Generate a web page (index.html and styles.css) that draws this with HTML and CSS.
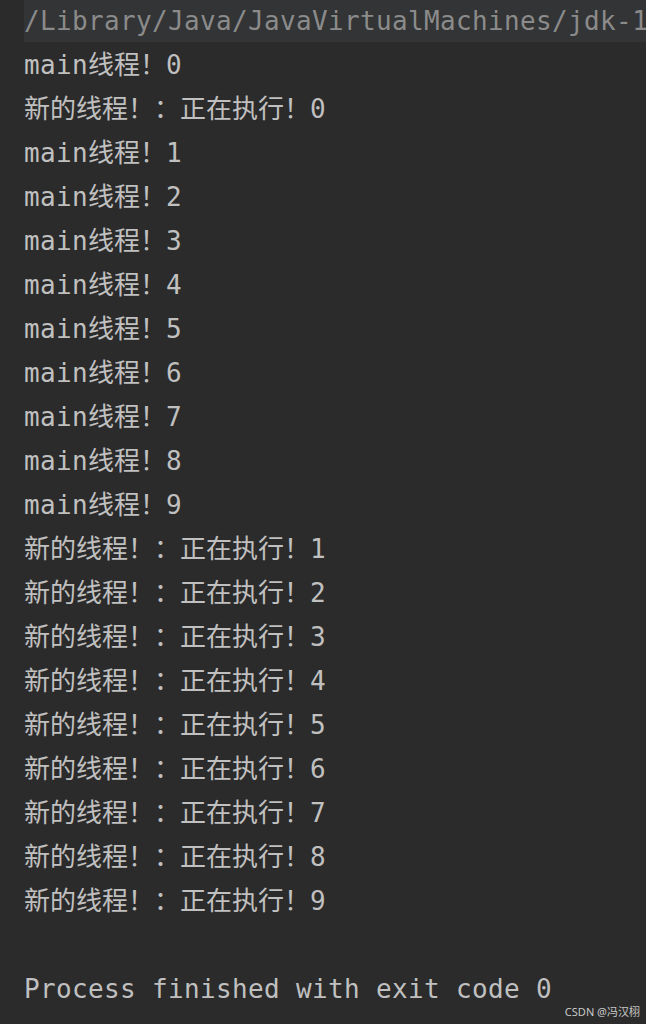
FILE: index.html
```html
<!DOCTYPE html>
<html>
<head>
<meta charset="utf-8">
<link rel="stylesheet" href="styles.css">
</head>
<body>
<div class="console">
  <div class="line cmd"><span class="m">/Library/Java/JavaVirtualMachines/jdk-1</span></div>
  <div class="line"><span class="m">main</span>线程！<span class="m">0</span></div>
  <div class="line">新的线程！：正在执行！<span class="m">0</span></div>
  <div class="line"><span class="m">main</span>线程！<span class="m">1</span></div>
  <div class="line"><span class="m">main</span>线程！<span class="m">2</span></div>
  <div class="line"><span class="m">main</span>线程！<span class="m">3</span></div>
  <div class="line"><span class="m">main</span>线程！<span class="m">4</span></div>
  <div class="line"><span class="m">main</span>线程！<span class="m">5</span></div>
  <div class="line"><span class="m">main</span>线程！<span class="m">6</span></div>
  <div class="line"><span class="m">main</span>线程！<span class="m">7</span></div>
  <div class="line"><span class="m">main</span>线程！<span class="m">8</span></div>
  <div class="line"><span class="m">main</span>线程！<span class="m">9</span></div>
  <div class="line">新的线程！：正在执行！<span class="m">1</span></div>
  <div class="line">新的线程！：正在执行！<span class="m">2</span></div>
  <div class="line">新的线程！：正在执行！<span class="m">3</span></div>
  <div class="line">新的线程！：正在执行！<span class="m">4</span></div>
  <div class="line">新的线程！：正在执行！<span class="m">5</span></div>
  <div class="line">新的线程！：正在执行！<span class="m">6</span></div>
  <div class="line">新的线程！：正在执行！<span class="m">7</span></div>
  <div class="line">新的线程！：正在执行！<span class="m">8</span></div>
  <div class="line">新的线程！：正在执行！<span class="m">9</span></div>
  <div class="line"></div>
  <div class="line"><span class="m">Process finished with exit code 0</span></div>
</div>
<div class="watermark">CSDN @冯汉栩</div>
</body>
</html>
```
FILE: styles.css
```css
html, body {
  margin: 0;
  padding: 0;
  background: #2b2b2b;
  height: 1024px;
  overflow: hidden;
}
.console {
  padding-left: 24px;
  font-family: "DejaVu Sans Mono", "Noto Sans CJK SC", monospace;
  font-size: 26px;
  color: #c0c0c0;
}
.line {
  height: 44px;
  line-height: 42px;
  white-space: pre;
}
.m {
  letter-spacing: 0.35px;
}
.cmd {
  background: #333435;
  color: #8b8b8b;
  height: 42px;
  margin-bottom: 2px;
}
.watermark {
  position: absolute;
  right: 6px;
  bottom: 5px;
  font-family: "Noto Sans", "Noto Sans CJK SC", sans-serif;
  font-size: 11px;
  color: #c8c8c8;
}
```
